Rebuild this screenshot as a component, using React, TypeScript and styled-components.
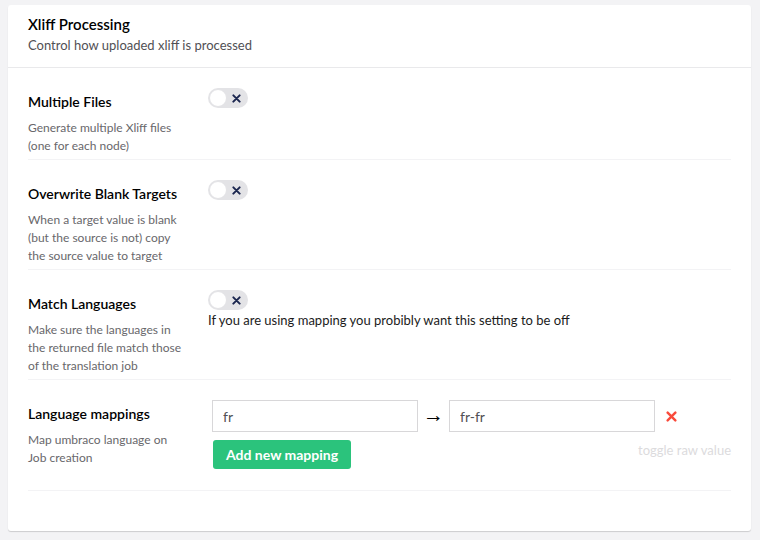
import React from "react";
import styled, { createGlobalStyle } from "styled-components";

const GlobalStyle = createGlobalStyle`
  html, body {
    margin: 0;
    padding: 0;
    background: #f3f3f5;
  }
  body {
    font-family: Lato, "Open Sans", "Liberation Sans", sans-serif;
    color: #1b264f;
  }
`;

const Page = styled.div`
  padding: 5px 9px 9px 8px;
`;

const Card = styled.div`
  background: #fff;
  border-radius: 3px;
  box-shadow: 0 1px 1px rgba(0, 0, 0, 0.16);
`;

const CardHeader = styled.div`
  padding: 9px 20px 13px;
  border-bottom: 1px solid #e9e9eb;
`;

const Title = styled.div`
  font-size: 15px;
  font-weight: 600;
  color: #000;
  line-height: 20px;
`;

const Subtitle = styled.div`
  font-size: 13px;
  color: #515054;
  line-height: 18px;
  margin-top: 2px;
`;

const CardBody = styled.div`
  padding: 0 20px 40px;
`;

const Property = styled.div<{ $last?: boolean }>`
  display: flex;
  padding: 20px 0 ${(p) => (p.$last ? "21px" : "4px")};
  border-bottom: 1px solid #f3f3f5;
`;

const LabelCol = styled.div`
  width: 180px;
  flex-shrink: 0;
`;

const Label = styled.div`
  font-size: 14px;
  font-weight: 600;
  color: #000;
  line-height: 20px;
  padding-top: 4px;
`;

const Description = styled.div`
  font-size: 12px;
  color: #68676b;
  line-height: 18px;
  margin-top: 7px;
`;

const Controls = styled.div`
  flex: 1;
  display: flex;
  flex-direction: column;
  align-items: flex-start;
`;

const ToggleTrack = styled.div`
  width: 40px;
  height: 20px;
  border-radius: 10px;
  background: #e3e3e6;
  position: relative;
`;

const ToggleKnob = styled.span`
  position: absolute;
  left: 1px;
  top: 1px;
  width: 16px;
  height: 16px;
  border-radius: 50%;
  background: #fff;
  border: 1px solid #e3e3e6;
`;

const ToggleIcon = styled.svg`
  position: absolute;
  right: 7px;
  top: 6px;
`;

const Hint = styled.div`
  font-size: 13px;
  color: #1b1b1b;
  line-height: 18px;
  margin-top: 1px;
`;

const MappingRow = styled.div`
  display: flex;
  align-items: center;
  width: 100%;
  padding-left: 4px;
  box-sizing: border-box;
`;

const TextInput = styled.input`
  width: 206px;
  height: 32px;
  box-sizing: border-box;
  border: 1px solid #d8d7d9;
  border-radius: 0;
  padding: 0 10px;
  font-family: Lato, "Open Sans", "Liberation Sans", sans-serif;
  font-size: 14px;
  color: #515054;
  outline: none;
`;

const Arrow = styled.span`
  width: 31px;
  text-align: center;
  font-size: 21px;
  line-height: 20px;
  color: #000;
  font-family: "Liberation Sans", sans-serif;
  margin-top: -2px;
`;

const RemoveButton = styled.button`
  border: none;
  background: none;
  padding: 0;
  margin-left: 11px;
  display: flex;
  cursor: pointer;
`;

const MappingFooter = styled.div`
  display: flex;
  justify-content: space-between;
  align-items: flex-start;
  width: 100%;
  margin-top: 8px;
  padding-left: 5px;
  box-sizing: border-box;
`;

const GreenButton = styled.button`
  background: #2bc37c;
  color: #fff;
  border: none;
  border-radius: 3px;
  height: 29px;
  padding: 0 13px;
  font-family: Lato, "Open Sans", "Liberation Sans", sans-serif;
  font-size: 14px;
  font-weight: 700;
  cursor: pointer;
`;

const RawToggle = styled.span`
  font-size: 13px;
  color: #dcdbdd;
  margin-top: 2px;
`;

const Toggle = () => (
  <ToggleTrack>
    <ToggleKnob />
    <ToggleIcon width="9" height="9" viewBox="0 0 10 10">
      <path d="M1.5 1.5 L8.5 8.5 M8.5 1.5 L1.5 8.5" stroke="#1b264f" strokeWidth="2.2" strokeLinecap="round" />
    </ToggleIcon>
  </ToggleTrack>
);

const settings = [
  {
    label: "Multiple Files",
    desc: ["Generate multiple Xliff files", "(one for each node)"],
  },
  {
    label: "Overwrite Blank Targets",
    desc: ["When a target value is blank", "(but the source is not) copy", "the source value to target"],
  },
  {
    label: "Match Languages",
    desc: ["Make sure the languages in", "the returned file match those", "of the translation job"],
    hint: "If you are using mapping you probibly want this setting to be off",
  },
];

export default function App() {
  return (
    <Page>
      <GlobalStyle />
      <Card>
        <CardHeader>
          <Title>Xliff Processing</Title>
          <Subtitle>Control how uploaded xliff is processed</Subtitle>
        </CardHeader>
        <CardBody>
          {settings.map((s) => (
            <Property key={s.label}>
              <LabelCol>
                <Label>{s.label}</Label>
                <Description>
                  {s.desc.map((line) => (
                    <div key={line}>{line}</div>
                  ))}
                </Description>
              </LabelCol>
              <Controls>
                <Toggle />
                {s.hint && <Hint>{s.hint}</Hint>}
              </Controls>
            </Property>
          ))}
          <Property $last>
            <LabelCol>
              <Label>Language mappings</Label>
              <Description>
                <div>Map umbraco language on</div>
                <div>Job creation</div>
              </Description>
            </LabelCol>
            <Controls>
              <MappingRow>
                <TextInput defaultValue="fr" />
                <Arrow>→</Arrow>
                <TextInput defaultValue="fr-fr" />
                <RemoveButton>
                  <svg width="11" height="11" viewBox="0 0 10 10">
                    <path d="M1.5 1.5 L8.5 8.5 M8.5 1.5 L1.5 8.5" stroke="#f94a3b" strokeWidth="2.2" strokeLinecap="round" />
                  </svg>
                </RemoveButton>
              </MappingRow>
              <MappingFooter>
                <GreenButton>Add new mapping</GreenButton>
                <RawToggle>toggle raw value</RawToggle>
              </MappingFooter>
            </Controls>
          </Property>
        </CardBody>
      </Card>
    </Page>
  );
}
